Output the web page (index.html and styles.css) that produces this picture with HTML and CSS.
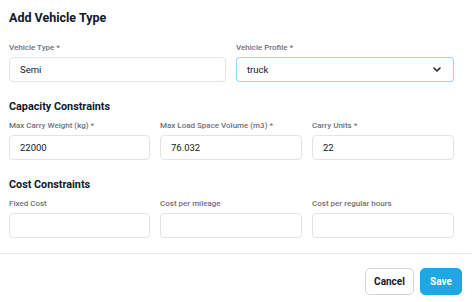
FILE: index.html
```html
<!DOCTYPE html>
<html lang="en">
<head>
    <meta charset="UTF-8">
    <meta name="viewport" content="width=device-width, initial-scale=1.0">
    <title>Add Vehicle Type</title>
    <link rel="stylesheet" href="styles.css">
</head>
<body>
    <div class="modal">
        <div class="modal-body">
            <h1 class="title">Add Vehicle Type</h1>

            <div class="row cols-2">
                <div class="field">
                    <label class="label">Vehicle Type *</label>
                    <div class="input">Semi</div>
                </div>
                <div class="field">
                    <label class="label">Vehicle Profile *</label>
                    <div class="dropdown">
                        <span>truck</span>
                        <svg class="chevron" width="8" height="5" viewBox="0 0 8 5">
                            <path d="M1 1 L4 4 L7 1" fill="none" stroke="#1f2937" stroke-width="1.6" stroke-linecap="round" stroke-linejoin="round"/>
                        </svg>
                    </div>
                </div>
            </div>

            <h2 class="section">Capacity Constraints</h2>
            <div class="row cols-3">
                <div class="field">
                    <label class="label">Max Carry Weight (kg) *</label>
                    <div class="input">22000</div>
                </div>
                <div class="field">
                    <label class="label">Max Load Space Volume (m3) *</label>
                    <div class="input">76.032</div>
                </div>
                <div class="field">
                    <label class="label">Carry Units *</label>
                    <div class="input">22</div>
                </div>
            </div>

            <h2 class="section">Cost Constraints</h2>
            <div class="row cols-3">
                <div class="field">
                    <label class="label">Fixed Cost</label>
                    <div class="input"></div>
                </div>
                <div class="field">
                    <label class="label">Cost per mileage</label>
                    <div class="input"></div>
                </div>
                <div class="field">
                    <label class="label">Cost per regular hours</label>
                    <div class="input"></div>
                </div>
            </div>
        </div>

        <div class="modal-footer">
            <button class="btn btn-cancel">Cancel</button>
            <button class="btn btn-save">Save</button>
        </div>
    </div>
</body>
</html>
```

FILE: styles.css
```css
* {
    margin: 0;
    padding: 0;
    box-sizing: border-box;
}

body {
    font-family: 'Roboto', 'Liberation Sans', sans-serif;
    background: #fff;
    color: #111827;
    overflow: hidden;
}

.modal-body {
    padding: 8px 18px 0 9px;
}

.title {
    font-size: 12.5px;
    line-height: 20px;
    font-weight: 700;
    color: #0f172a;
    margin-bottom: 15px;
}

.row {
    display: grid;
    gap: 10px;
}

.cols-2 {
    grid-template-columns: 217px 218px;
}

.cols-3 {
    grid-template-columns: 141px 142px 142px;
}

.field {
    display: flex;
    flex-direction: column;
}

.label {
    font-size: 8px;
    line-height: 10px;
    font-weight: 500;
    color: #6b7280;
    margin-bottom: 4px;
}

.input,
.dropdown {
    height: 25px;
    border: 1px solid #e2e4e8;
    border-radius: 4px;
    padding: 0 10px;
    font-size: 9.5px;
    line-height: 23px;
    color: #111827;
    background: #fff;
}

.dropdown {
    display: flex;
    align-items: center;
    justify-content: space-between;
    border: none;
    box-shadow: inset 0 0 0 1px #93d8f6;
    padding: 0 13px 0 11px;
}

.chevron {
    display: block;
    flex: none;
}

.section {
    font-size: 10.8px;
    line-height: 14px;
    font-weight: 700;
    color: #0f172a;
    margin-top: 18px;
    margin-bottom: 7px;
}

.modal-footer {
    margin-top: 15px;
    border-top: 1px solid #e5e7eb;
    padding: 14px 10px 0 0;
    display: flex;
    justify-content: flex-end;
    gap: 6px;
}

.btn {
    font-family: 'Roboto', 'Liberation Sans', sans-serif;
    height: 27px;
    border-radius: 5px;
    font-size: 10px;
    font-weight: 700;
    cursor: pointer;
}

.btn-cancel {
    width: 49px;
    background: #fff;
    border: 1px solid #d1d5db;
    color: #111827;
}

.btn-save {
    width: 42px;
    background: #1ea7e1;
    border: 1px solid #1ea7e1;
    color: #fff;
}
```
